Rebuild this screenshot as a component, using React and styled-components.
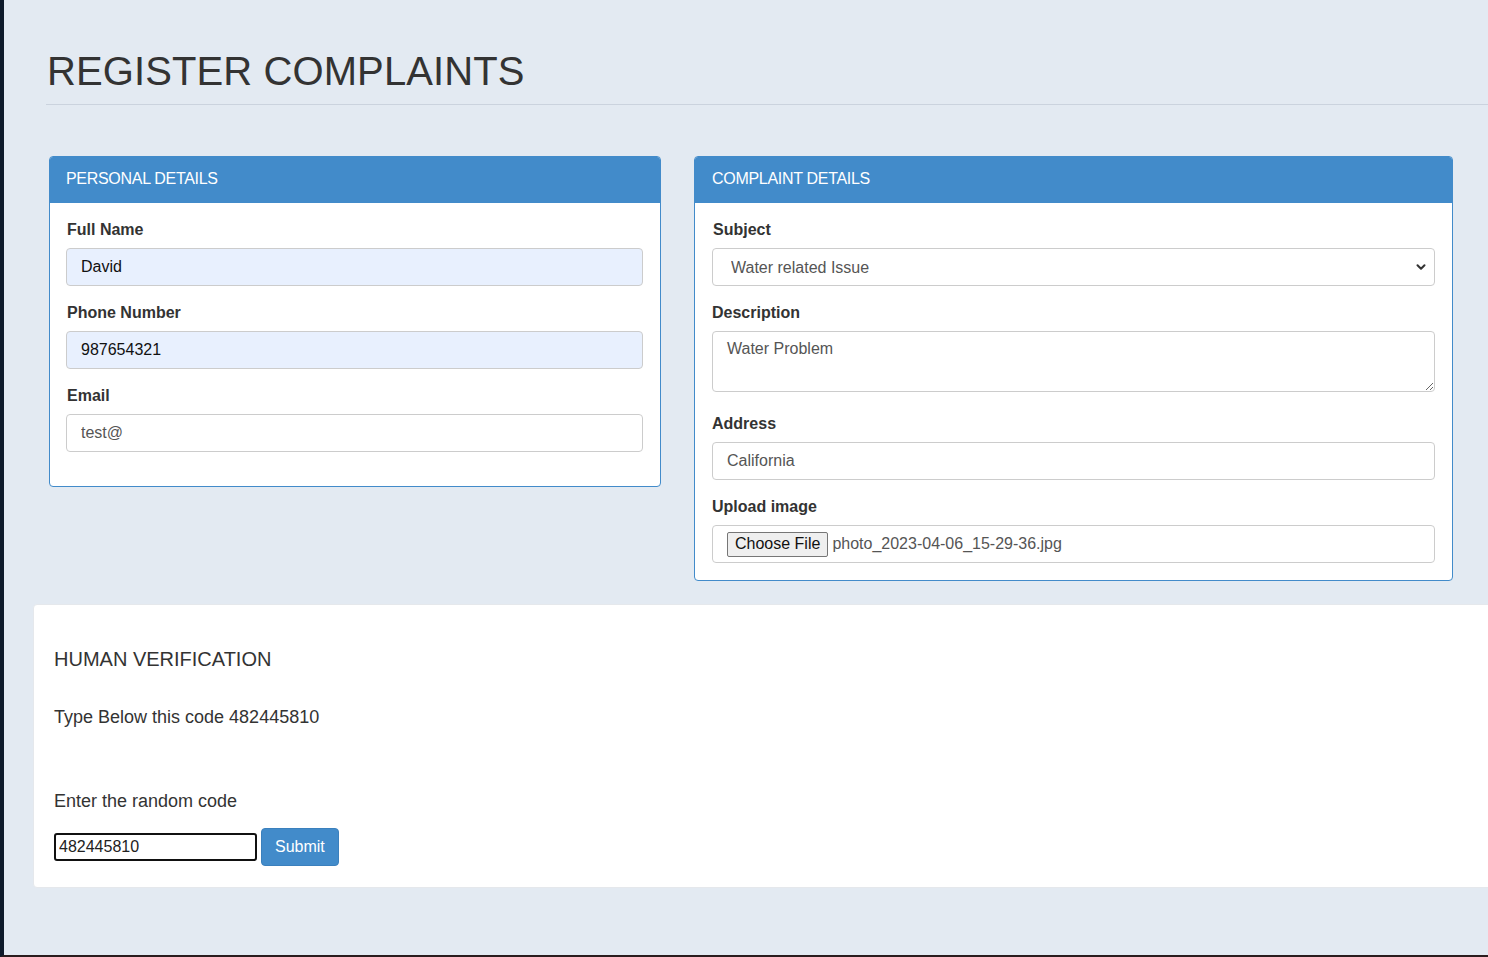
import React from "react";
import styled, { createGlobalStyle } from "styled-components";
import { FiChevronDown } from "react-icons/fi";

const GlobalStyle = createGlobalStyle`
  html, body {
    margin: 0;
    padding: 0;
    overflow: hidden;
    background: #e3eaf2;
  }
  body {
    font-family: "Liberation Sans", Arial, sans-serif;
    color: #333;
  }
  * { box-sizing: border-box; }
`;

const Page = styled.div`
  min-height: 957px;
  width: 1488px;
  border-left: 4px solid #0e1a2b;
  border-bottom: 2px solid #2a1c1e;
  background: #e3eaf2;
  padding-top: 49px;
`;

const Header = styled.div`
  margin-left: 42px;
  & h1 {
    margin: 0;
    padding-left: 1px;
    font-size: 40px;
    line-height: 44px;
    font-weight: 400;
    letter-spacing: 0.1px;
    color: #333;
  }
  & hr {
    margin: 11px 0 0;
    border: 0;
    border-top: 1px solid #cbd3de;
  }
`;

const Columns = styled.div`
  display: grid;
  grid-template-columns: 612px 759px;
  column-gap: 33px;
  align-items: start;
  margin: 51px 0 0 45px;
`;

const Panel = styled.div`
  background: #fff;
  border: 1px solid #428bca;
  border-radius: 4px;
  overflow: hidden;
`;

const PanelHead = styled.div`
  height: 46px;
  background: #428bca;
  color: #fff;
  font-size: 16px;
  letter-spacing: -0.3px;
  display: flex;
  align-items: center;
  padding: 0 0 3px ${(p) => p.$indent || 16}px;
`;

const PanelBody = styled.div`
  padding: 17px 17px 17px ${(p) => p.$left || 16}px;
`;

const Group = styled.div`
  display: flow-root;
  margin-bottom: ${(p) => (p.$last ? 0 : 17)}px;
`;

const Label = styled.label`
  display: block;
  font-weight: 700;
  font-size: 16px;
  line-height: 20px;
  margin-bottom: 8px;
  padding-left: ${(p) => p.$shift || 0}px;
  color: #333;
`;

const Field = styled.input`
  display: block;
  width: 100%;
  height: 38px;
  border: 1px solid #ccc;
  border-radius: 4px;
  padding: 0 14px;
  font: 16px "Liberation Sans", Arial, sans-serif;
  color: ${(p) => (p.$filled ? "#111" : "#555")};
  background: ${(p) => (p.$filled ? "#e8f0fe" : "#fff")};
  outline: none;
`;

const SelectWrap = styled.div`
  position: relative;
  & svg {
    position: absolute;
    right: 7px;
    top: 12px;
    width: 14px;
    height: 14px;
    color: #333;
    stroke-width: 3.5;
    pointer-events: none;
  }
`;

const Select = styled.select`
  display: block;
  width: 100%;
  height: 38px;
  border: 1px solid #ccc;
  border-radius: 4px;
  padding: 0 14px 0 18px;
  font: 16px "Liberation Sans", Arial, sans-serif;
  color: #555;
  background: #fff;
  appearance: none;
  outline: none;
`;

const TextArea = styled.textarea`
  display: block;
  width: 100%;
  height: 61px;
  border: 1px solid #ccc;
  border-radius: 4px;
  padding: 8px 14px;
  font: 16px "Liberation Sans", Arial, sans-serif;
  color: #555;
  resize: vertical;
  margin-bottom: 5px;
  outline: none;
`;

const FileBox = styled.div`
  display: flex;
  align-items: center;
  gap: 4px;
  height: 38px;
  border: 1px solid #ccc;
  border-radius: 4px;
  padding: 0 14px;
  font-size: 16px;
  color: #555;
  background: #fff;
`;

const FileButton = styled.button`
  height: 25px;
  padding: 0 7px;
  border: 1px solid #767676;
  border-radius: 2px;
  background: #efefef;
  color: #111;
  font: 16px "Liberation Sans", Arial, sans-serif;
`;

const Verify = styled.div`
  margin: 23px 0 0 29px;
  width: 1500px;
  background: #fff;
  border: 1px solid #e5e8ec;
  border-radius: 4px;
  padding: 43px 20px 21px;
  & h4 {
    margin: 0;
    font-size: 20px;
    line-height: 22px;
    font-weight: 400;
  }
`;

const Line = styled.p`
  margin: ${(p) => p.$top}px 0 0;
  font-size: 18px;
  line-height: 20px;
`;

const CodeRow = styled.div`
  display: flex;
  align-items: center;
  gap: 4px;
  margin-top: 17px;
`;

const CodeInput = styled.input`
  width: 203px;
  height: 28px;
  border: 2px solid #111;
  border-radius: 3px;
  padding: 0 3px;
  font: 16px "Liberation Sans", Arial, sans-serif;
  color: #222;
  outline: none;
`;

const Submit = styled.button`
  height: 38px;
  padding: 0 13px;
  border: 1px solid #3b80bd;
  border-radius: 4px;
  background: #428bca;
  color: #fff;
  font: 16px "Liberation Sans", Arial, sans-serif;
`;

export default function App() {
  return (
    <>
      <GlobalStyle />
      <Page>
        <Header>
          <h1>REGISTER COMPLAINTS</h1>
          <hr />
        </Header>

        <Columns>
          <Panel>
            <PanelHead>PERSONAL DETAILS</PanelHead>
            <PanelBody>
              <Group>
                <Label $shift={1}>Full Name</Label>
                <Field $filled defaultValue="David" />
              </Group>
              <Group>
                <Label $shift={1}>Phone Number</Label>
                <Field $filled defaultValue="987654321" />
              </Group>
              <Group>
                <Label $shift={1}>Email</Label>
                <Field defaultValue="test@" />
              </Group>
            </PanelBody>
          </Panel>

          <Panel>
            <PanelHead $indent={17}>COMPLAINT DETAILS</PanelHead>
            <PanelBody $left={17}>
              <Group>
                <Label $shift={1}>Subject</Label>
                <SelectWrap>
                  <Select defaultValue="water">
                    <option value="water">Water related Issue</option>
                    <option value="road">Road related Issue</option>
                  </Select>
                  <FiChevronDown />
                </SelectWrap>
              </Group>
              <Group>
                <Label>Description</Label>
                <TextArea defaultValue="Water Problem" />
              </Group>
              <Group>
                <Label>Address</Label>
                <Field defaultValue="California" />
              </Group>
              <Group $last>
                <Label>Upload image</Label>
                <FileBox>
                  <FileButton type="button">Choose File</FileButton>
                  <span>photo_2023-04-06_15-29-36.jpg</span>
                </FileBox>
              </Group>
            </PanelBody>
          </Panel>
        </Columns>

        <Verify>
          <h4>HUMAN VERIFICATION</h4>
          <Line $top={37}>Type Below this code 482445810</Line>
          <Line $top={64}>Enter the random code</Line>
          <CodeRow>
            <CodeInput defaultValue="482445810" />
            <Submit type="button">Submit</Submit>
          </CodeRow>
        </Verify>
      </Page>
    </>
  );
}
